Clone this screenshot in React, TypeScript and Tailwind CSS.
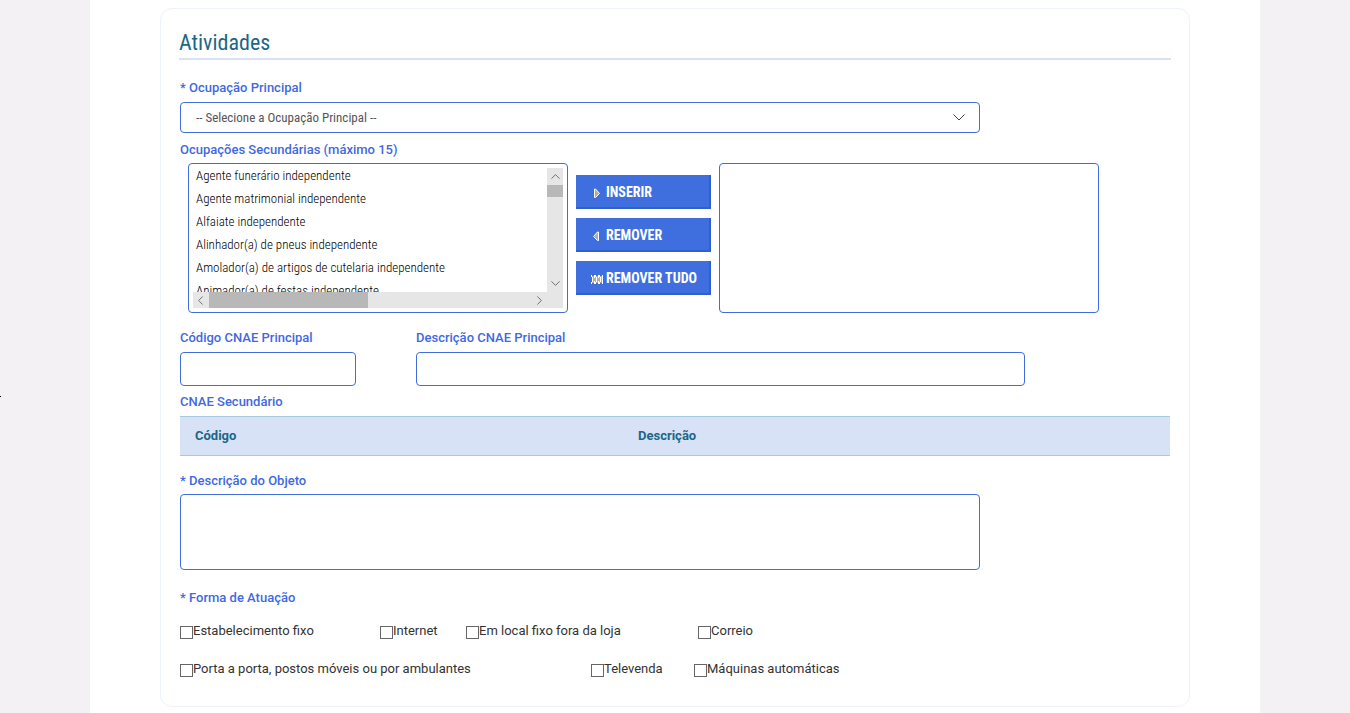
import { useState, type ReactNode } from "react";
import { ChevronDown, ChevronLeft, ChevronRight, ChevronUp } from "lucide-react";

const ocupacoes = [
  "Agente funerário independente",
  "Agente matrimonial independente",
  "Alfaiate independente",
  "Alinhador(a) de pneus independente",
  "Amolador(a) de artigos de cutelaria independente",
  "Animador(a) de festas independente",
];

const formas = [
  [
    { id: "fixo", label: "Estabelecimento fixo", width: "w-[200px]" },
    { id: "internet", label: "Internet", width: "w-[86px]" },
    { id: "fora", label: "Em local fixo fora da loja", width: "w-[232px]" },
    { id: "correio", label: "Correio", width: "w-auto" },
  ],
  [
    { id: "porta", label: "Porta a porta, postos móveis ou por ambulantes", width: "w-[411px]" },
    { id: "televenda", label: "Televenda", width: "w-[103px]" },
    { id: "maquinas", label: "Máquinas automáticas", width: "w-auto" },
  ],
];

const condensed = "font-['Roboto_Condensed','Roboto','Liberation_Sans',sans-serif]";
const condensedLight = "font-['Roboto_Condensed_Light','Roboto_Condensed','Roboto',sans-serif]";
const field = "rounded border border-[#3f6ddc] bg-white outline-none";

function Label({ htmlFor, children }: { htmlFor: string; children: ReactNode }) {
  return (
    <label htmlFor={htmlFor} className="block text-[13px] leading-5 font-medium text-[#4169e1]">
      {children}
    </label>
  );
}

function Triangles({ kind }: { kind: "right" | "left" | "all" }) {
  return (
    <svg width="12" height="12" viewBox="0 0 12 12" className="mt-0.5" aria-hidden="true">
      {kind === "right" && <path d="M3.5 2v8.500h1L8.500 6.500 4.500 2z" fill="#b5ada5" stroke="#fff" />}
      {kind === "left" && <path d="M7.500 2v8.500h-1L2.500 6.500 6.500 2z" fill="#b5ada5" stroke="#fff" />}
      {kind === "all" && (
        <>
          <path d="M1 3h10v7H1z" fill="#b5ada5" />
          <path d="M.5 2v2M.5 9v2M1.500 4v5M3.500 2v3M3.500 8v3M4.500 2v2M4.500 9v2M5.500 4v5M7.500 2v3M7.500 8v3M8.500 2v2M8.500 9v2M9.500 4v5M11.500 2v9" stroke="#fff" />
        </>
      )}
    </svg>
  );
}

function ActionButton({ icon, children, onClick }: { icon: "right" | "left" | "all"; children: ReactNode; onClick?: () => void }) {
  return (
    <button
      type="button"
      onClick={onClick}
      className={`flex h-[34px] w-full items-center gap-[3px] border-r-2 border-b-2 border-[#305fd0] bg-[#3f6fdf] pt-0.5 pl-[15px] text-sm font-bold text-white ${condensed}`}
    >
      <Triangles kind={icon} />
      {children}
    </button>
  );
}

export default function App() {
  const [selected, setSelected] = useState<string[]>([]);
  const [inserted, setInserted] = useState<string[]>([]);
  const [marked, setMarked] = useState<string[]>([]);

  return (
    <div className="relative min-h-screen bg-[#f3f1f3] px-[90px] font-['Roboto','Liberation_Sans',sans-serif] text-[13px] text-[#333]">
      <span className="absolute top-[396px] left-0 h-px w-px bg-black" />
      <main className="min-h-screen bg-white px-[70px] pt-2 pb-1.5">
        <form className="rounded-xl border border-[#eef2fc] px-[18px] pt-[19px] pb-[27px]">
          <h2 className={`border-b-2 border-[#d8e2f6] text-[22px] leading-[30px] text-[#1c6686] ${condensed}`}>
            Atividades
          </h2>

          <div className="px-px pt-[18px]">
            <Label htmlFor="principal">* Ocupação Principal</Label>
            <div className="relative mt-1 max-w-[800px]">
              <select
                id="principal"
                className={`block h-[31px] w-full appearance-none px-[15px] text-[13px] text-[#555] ${field} ${condensed}`}
              >
                <option>-- Selecione a Ocupação Principal --</option>
              </select>
              <svg className="pointer-events-none absolute top-3 right-[15px]" width="12" height="8" fill="none" stroke="#444" aria-hidden="true">
                <path d="M.5 .5l5.500 5.500L11.500 .5" />
              </svg>
            </div>

            <div className="mt-[7px]">
              <Label htmlFor="secundarias">Ocupações Secundárias (máximo 15)</Label>
            </div>
            <div className="mt-[3px] flex gap-2 pl-2">
              <div className={`grid h-[150px] w-[380px] grid-cols-[1fr_16px] grid-rows-[124px_16px] p-1 ${field}`}>
                <select
                  id="secundarias"
                  multiple
                  value={selected}
                  onChange={(e) => setSelected(Array.from(e.target.selectedOptions, (o) => o.value))}
                  className={`h-full w-full appearance-none overflow-hidden p-0 text-[13px] font-light text-black outline-none ${condensedLight}`}
                >
                  {ocupacoes.map((nome) => (
                    <option key={nome} className="h-[23px] p-0 pl-[3px] font-light">
                      {nome}
                    </option>
                  ))}
                </select>
                <div className="flex flex-col items-center bg-[#e6e6e6] text-[#666]">
                  <ChevronUp size={15} strokeWidth={1.5} className="mt-px" />
                  <div className="mt-px h-3 w-full shrink-0 bg-[#b8b8b8]" />
                  <ChevronDown size={15} strokeWidth={1.5} className="mt-auto mb-px" />
                </div>
                <div className="flex items-center bg-[#e6e6e6] text-[#666]">
                  <ChevronLeft size={15} strokeWidth={1.5} className="mr-px" />
                  <div className="h-full w-[159px] bg-[#b8b8b8]" />
                  <ChevronRight size={15} strokeWidth={1.5} className="ml-auto" />
                </div>
                <div className="bg-[#e6e6e6]" />
              </div>

              <div className="flex w-[135px] flex-col gap-[9px] pt-3">
                <ActionButton icon="right" onClick={() => setInserted(Array.from(new Set([...inserted, ...selected])))}>
                  INSERIR
                </ActionButton>
                <ActionButton icon="left" onClick={() => setInserted(inserted.filter((o) => !marked.includes(o)))}>
                  REMOVER
                </ActionButton>
                <ActionButton icon="all" onClick={() => setInserted([])}>
                  REMOVER TUDO
                </ActionButton>
              </div>

              <select
                multiple
                aria-label="Ocupações selecionadas"
                value={marked}
                onChange={(e) => setMarked(Array.from(e.target.selectedOptions, (o) => o.value))}
                className={`h-[150px] w-[380px] p-1 text-[13px] ${field} ${condensed}`}
              >
                {inserted.map((nome) => (
                  <option key={nome}>{nome}</option>
                ))}
              </select>
            </div>

            <div className="mt-[15px] flex gap-[60px]">
              <div className="w-44">
                <Label htmlFor="codigo">Código CNAE Principal</Label>
                <input id="codigo" className={`mt-1 block h-[34px] w-full px-3 ${field}`} />
              </div>
              <div className="w-[609px]">
                <Label htmlFor="descricao">Descrição CNAE Principal</Label>
                <input id="descricao" className={`mt-1 block h-[34px] w-full px-3 ${field}`} />
              </div>
            </div>

            <table className="mt-1.5 w-full table-fixed text-left">
              <caption className="pb-1 text-left text-[13px] leading-5 font-medium text-[#4169e1]">CNAE Secundário</caption>
              <thead>
                <tr className="h-[39px] border-y border-[#a5cae2] bg-[#d8e2f6] text-[#1c6686]">
                  <th className="w-[443px] px-[15px] font-bold">Código</th>
                  <th className="px-[15px] font-bold">Descrição</th>
                </tr>
              </thead>
            </table>

            <div className="mt-[15px]">
              <Label htmlFor="objeto">* Descrição do Objeto</Label>
              <textarea id="objeto" className={`mt-[3px] block h-[76px] w-full max-w-[800px] resize-none p-3 ${field}`} />
            </div>

            <fieldset className="mt-[18px]">
              <legend className="text-[13px] leading-5 font-medium text-[#4169e1]">* Forma de Atuação</legend>
              <div className="flex flex-col gap-[18px] pt-[13px]">
                {formas.map((linha, i) => (
                  <div key={i} className="flex">
                    {linha.map(({ id, label, width }) => (
                      <div key={id} className={`flex leading-5 ${width}`}>
                        <input
                          id={id}
                          type="checkbox"
                          className="mt-[5px] size-[13px] shrink-0 appearance-none border border-[#666] bg-white checked:bg-[#4169e1]"
                        />
                        <label htmlFor={id}>{label}</label>
                      </div>
                    ))}
                  </div>
                ))}
              </div>
            </fieldset>
          </div>
        </form>
      </main>
    </div>
  );
}
